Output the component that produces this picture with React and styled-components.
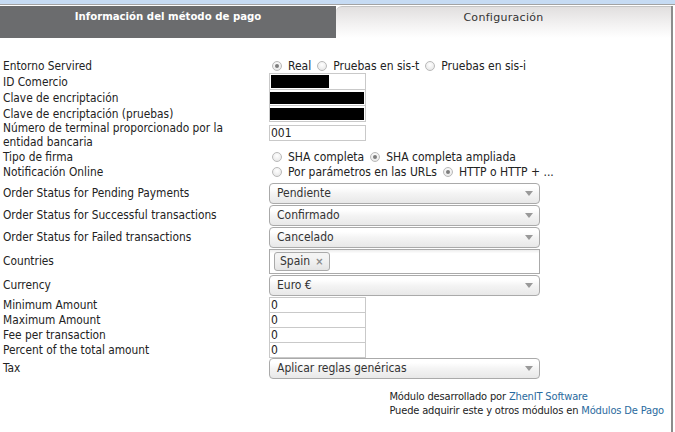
import React from "react";
import styled, { createGlobalStyle } from "styled-components";

const GlobalStyle = createGlobalStyle`
  html, body {
    margin: 0;
    padding: 0;
    background: #fff;
  }
  body {
    font-family: "DejaVu Sans Condensed", "Liberation Sans", Arial, sans-serif;
    font-size: 12px;
    color: #222;
  }
`;

const Frame = styled.div`
  width: 675px;
  height: 432px;
  overflow: hidden;
  display: flex;
  flex-direction: column;
  background: #fff;
`;

const TopStrip = styled.div`
  height: 4px;
  flex: none;
  background: #c6dbf3;
  border-bottom: 1px solid #a3a3a3;
`;

const Panel = styled.div`
  flex: 1;
  width: 671px;
  margin-top: 1px;
  border-right: 2px solid #8c8c8c;
  display: flex;
  flex-direction: column;
`;

const Tabs = styled.div`
  display: flex;
  height: 32px;
  flex: none;
`;

const Tab = styled.div`
  box-sizing: border-box;
  padding-top: 4px;
  line-height: 14px;
  text-align: center;
  ${p =>
    p.$active
      ? `
    width: 336px;
    background: #6b6c6e;
    color: #fff;
    font-weight: bold;
    font-size: 11.3px;
  `
      : `
    flex: 1;
    background: linear-gradient(#e1dfdf, #f4f3f3 60%, #fff);
    border-top: 1px solid #c4c4c4;
    border-top-left-radius: 6px;
    color: #333;
    font-family: "DejaVu Sans", sans-serif;
    font-size: 11px;
    letter-spacing: 0.3px;
  `}
`;

const Form = styled.div`
  padding: 21px 0 0 3px;
  display: flex;
  flex-direction: column;
`;

const Row = styled.div`
  display: grid;
  grid-template-columns: 266px 1fr;
  height: ${p => p.$h}px;
  align-items: ${p => p.$align || "center"};
`;

const Label = styled.div`
  line-height: 14px;
  font-size: 11.8px;
  color: #222;
  white-space: nowrap;
  align-self: center;
`;

const RadioGroup = styled.div`
  display: flex;
  align-items: center;
  white-space: nowrap;
  line-height: 14px;
`;

const Option = styled.label`
  display: inline-flex;
  align-items: center;
  margin-right: 3px;
`;

const Radio = styled.span`
  box-sizing: border-box;
  width: 10px;
  height: 10px;
  margin: 0 6px 0 3px;
  border-radius: 50%;
  border: 1px solid #b9b9b9;
  background: radial-gradient(circle at 50% 35%, #fff, #e2e2e2);
  position: relative;
  &::after {
    content: "";
    display: ${p => (p.$checked ? "block" : "none")};
    position: absolute;
    left: 2px;
    top: 2px;
    width: 4px;
    height: 4px;
    border-radius: 50%;
    background: #7d7d7d;
  }
`;

const TextBox = styled.div`
  box-sizing: border-box;
  width: 97px;
  height: ${p => p.$h || 17}px;
  margin-top: ${p => p.$mt || 0}px;
  border: 1px solid #c9c9c9;
  display: flex;
  align-items: center;
  padding: 0 1px;
  line-height: 13px;
  background: #fff;
  color: #222;
`;

const Redact = styled.span`
  display: block;
  background: #000;
  width: ${p => p.$w}px;
  height: ${p => p.$h}px;
  margin-left: ${p => p.$ml || 0}px;
`;

const Select = styled.div`
  box-sizing: border-box;
  width: 271px;
  height: 21px;
  border: 1px solid #aaa;
  border-radius: 4px;
  background: linear-gradient(#fff 20%, #f4f4f4 50%, #e8e8e8);
  display: flex;
  align-items: center;
  justify-content: space-between;
  padding: 0 6px 0 7px;
  color: #333;
  font-size: 12px;
`;

const Arrow = () => (
  <svg width="8" height="5" viewBox="0 0 8 5">
    <path d="M0 0 L8 0 L4 5 Z" fill="#999" />
  </svg>
);

const MultiBox = styled.div`
  box-sizing: border-box;
  width: 271px;
  height: 25px;
  border: 1px solid #aaa;
  background: linear-gradient(#eee 1%, #fff 15%);
  padding: 2px 4px;
  display: flex;
  align-items: center;
`;

const Tag = styled.span`
  box-sizing: border-box;
  height: 19px;
  display: inline-flex;
  align-items: center;
  padding: 0 6px 0 5px;
  border: 1px solid #aaa;
  border-radius: 3px;
  background: linear-gradient(#f4f4f4 20%, #f0f0f0 50%, #e4e4e4);
  color: #333;
  font-size: 12px;
`;

const TagClose = styled.span`
  margin-left: 5px;
  color: #8a8a8a;
  font-size: 11px;
  font-weight: bold;
`;

const Footer = styled.div`
  margin-top: 11px;
  display: flex;
  justify-content: flex-end;
  padding-right: 7px;
`;

const FooterText = styled.div`
  line-height: 14px;
  font-size: 11px;
  letter-spacing: -0.15px;
  color: #222;
  white-space: nowrap;
`;

const Link = styled.a`
  color: #2a6a9e;
  text-decoration: none;
`;

const SelectRow = ({ label, value }) => (
  <Row $h={22}>
    <Label>{label}</Label>
    <Select>
      {value}
      <Arrow />
    </Select>
  </Row>
);

const AmountRow = ({ label }) => (
  <Row $h={15} $align="start">
    <Label>{label}</Label>
    <TextBox $h={16}>0</TextBox>
  </Row>
);

const Spacer = styled.div`
  height: ${p => p.$h}px;
`;

const App = () => (
  <>
    <GlobalStyle />
    <Frame>
      <TopStrip />
      <Panel>
        <Tabs>
          <Tab $active>Información del método de pago</Tab>
          <Tab>Configuración</Tab>
        </Tabs>
        <Form>
          <Row $h={14}>
            <Label>Entorno Servired</Label>
            <RadioGroup>
              <Option>
                <Radio $checked />
                Real
              </Option>
              <Option>
                <Radio />
                Pruebas en sis-t
              </Option>
              <Option>
                <Radio />
                Pruebas en sis-i
              </Option>
            </RadioGroup>
          </Row>
          <Row $h={16} $align="start">
            <Label>ID Comercio</Label>
            <TextBox>
              <Redact $w={58} $h={13} />
            </TextBox>
          </Row>
          <Row $h={16} $align="start">
            <Label>Clave de encriptación</Label>
            <TextBox>
              <Redact $w={95} $h={12} $ml={-1} />
            </TextBox>
          </Row>
          <Row $h={16} $align="start">
            <Label>Clave de encriptación (pruebas)</Label>
            <TextBox>
              <Redact $w={95} $h={12} $ml={-1} />
            </TextBox>
          </Row>
          <Row $h={28} $align="start">
            <Label>
              Número de terminal proporcionado por la
              <br />
              entidad bancaria
            </Label>
            <TextBox $h={16} $mt={4}>
              001
            </TextBox>
          </Row>
          <Row $h={15}>
            <Label>Tipo de firma</Label>
            <RadioGroup>
              <Option>
                <Radio />
                SHA completa
              </Option>
              <Option>
                <Radio $checked />
                SHA completa ampliada
              </Option>
            </RadioGroup>
          </Row>
          <Row $h={16}>
            <Label>Notificación Online</Label>
            <RadioGroup>
              <Option>
                <Radio />
                Por parámetros en las URLs
              </Option>
              <Option>
                <Radio $checked />
                HTTP o HTTP + ...
              </Option>
            </RadioGroup>
          </Row>
          <Spacer $h={2} />
          <SelectRow label="Order Status for Pending Payments" value="Pendiente" />
          <SelectRow
            label="Order Status for Successful transactions"
            value="Confirmado"
          />
          <SelectRow
            label="Order Status for Failed transactions"
            value="Cancelado"
          />
          <Row $h={26}>
            <Label>Countries</Label>
            <MultiBox>
              <Tag>
                Spain<TagClose>×</TagClose>
              </Tag>
            </MultiBox>
          </Row>
          <SelectRow label="Currency" value="Euro €" />
          <Spacer $h={1} />
          <AmountRow label="Minimum Amount" />
          <AmountRow label="Maximum Amount" />
          <AmountRow label="Fee per transaction" />
          <AmountRow label="Percent of the total amount" />
          <SelectRow label="Tax" value="Aplicar reglas genéricas" />
          <Footer>
            <FooterText>
              Módulo desarrollado por <Link href="#">ZhenIT Software</Link>
              <br />
              Puede adquirir este y otros módulos en{" "}
              <Link href="#">Módulos De Pago</Link>
            </FooterText>
          </Footer>
        </Form>
      </Panel>
    </Frame>
  </>
);

export default App;
